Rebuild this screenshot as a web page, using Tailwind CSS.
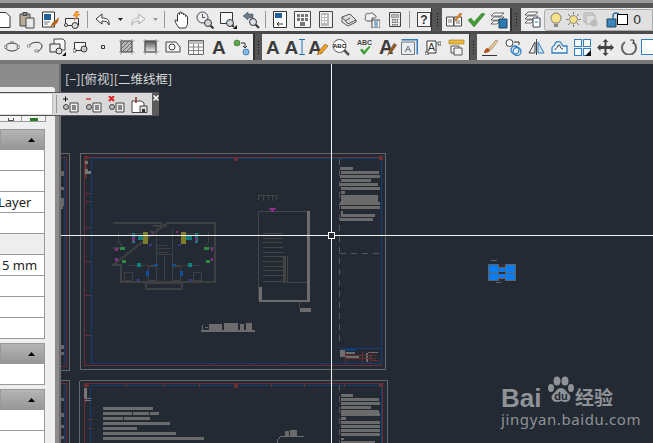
<!DOCTYPE html>
<html lang="en">
<head>
<meta charset="UTF-8">
<title>CAD</title>
<script src="https://cdn.jsdelivr.net/npm/@tailwindcss/browser@4"></script>
</head>
<body class="w-[653px] h-[443px] overflow-hidden bg-[#8a8a8a] font-['Liberation_Sans',sans-serif]">
<div class="relative w-[653px] h-[443px] overflow-hidden">
  <!-- top strip -->
  <div class="h-[3px] bg-[#9a9a9a]"></div>
  <div class="h-[5px] bg-[#555555]"></div>

  <!-- toolbar row 1 -->
  <div class="flex h-[23px] bg-[#4a4a4a]">
    <div class="flex items-center w-[432px] h-[23px] bg-[#ececec] border-r border-[#333] overflow-hidden">
      <div class="flex items-center -ml-[8px]">
        <span class="w-[23px] flex justify-center"><svg class="w-[18px] h-[18px]" viewBox="0 0 18 18"><path d="M2 1.5h9l4 4v11H2z" fill="#fff" stroke="#333"/></svg></span>
        <span class="w-[23px] flex justify-center"><svg class="w-[18px] h-[18px]" viewBox="0 0 18 18"><path d="M2 3h10v12H2z" fill="#b9ab97" stroke="#444"/><path d="M5 1.5h4v3H5z" fill="#888" stroke="#444"/><path d="M8 7h8v10H8z" fill="#e8e8e8" stroke="#444"/></svg></span>
        <span class="w-[23px] flex justify-center"><svg class="w-[18px] h-[18px]" viewBox="0 0 18 18"><path d="M1.5 1h12v15h-12z" fill="#fff" stroke="#333"/><path d="M3 3h7v6H3z" fill="#1f5f9c"/><path d="M3 11h6M3 13h4" stroke="#777"/><path d="M9 16l3-5 3-2 3-3-1 5-3 3z" fill="#b8651c"/></svg></span>
        <span class="w-[23px] flex justify-center"><svg class="w-[18px] h-[18px]" viewBox="0 0 18 18"><path d="M1.500 7.500h13v7h-13z" fill="#f4f4f4" stroke="#333"/><circle cx="2" cy="14" r="1.500" fill="#fff" stroke="#333"/><circle cx="11" cy="14.500" r="3" fill="#ddd" stroke="#333"/><path d="M12 0l-3 5h3l-2 5 6-7h-3l2-3z" fill="#f5a31c" stroke="#c66" stroke-width=".4"/></svg></span>
      </div>
      <span class="w-px h-[17px] bg-[#999] ml-[3px] mr-[7px]"></span>
      <svg class="w-[16px] h-[14px]" viewBox="0 0 16 14"><path d="M7 1L1 6l6 5V8c4 0 6 1 7 4 1-5-2-7-7-7z" fill="#fff" stroke="#333"/></svg>
      <svg class="w-[5px] h-[3px] ml-[7px]" viewBox="0 0 5 3"><path d="M0 0h5L2.500 3z" fill="#222"/></svg>
      <svg class="w-[16px] h-[14px] ml-[7px]" viewBox="0 0 16 14"><path d="M9 1l6 5-6 5V8C5 8 3 9 2 12 1 7 4 5 9 5z" fill="#f2f2f2" stroke="#aaa"/></svg>
      <svg class="w-[5px] h-[3px] ml-[7px]" viewBox="0 0 5 3"><path d="M0 0h5L2.500 3z" fill="#999"/></svg>
      <span class="w-px h-[17px] bg-[#999] ml-[6px] mr-[6px]"></span>
      <span class="w-[23px] flex justify-center"><svg class="w-[17px] h-[18px]" viewBox="0 0 17 18"><path d="M5 17C3 14 1 11 1 9.500c0-1 1.500-1 2.500 1V3.500c0-1.500 2-1.500 2 0V2c0-1.500 2-1.500 2 0v1c0-1.500 2-1.500 2 0v1c0-1 2-1 2 0v1.500c0-1 2-1 2 0V12c0 2-1 3.500-2 5z" fill="#fff" stroke="#333"/></svg></span>
      <span class="w-[23px] flex justify-center"><svg class="w-[18px] h-[18px]" viewBox="0 0 18 18"><circle cx="6.500" cy="6.500" r="5.500" fill="#eee" stroke="#445"/><path d="M6.500 3v3.500H9" fill="none" stroke="#445"/><circle cx="12" cy="12" r="3.500" fill="#cdd6dc" stroke="#333"/><path d="M14.500 14.500l3 3" stroke="#333" stroke-width="2"/></svg></span>
      <span class="w-[23px] flex justify-center"><svg class="w-[18px] h-[18px]" viewBox="0 0 18 18"><path d="M1.500 1.500h12v11h-12z" fill="#f6f6f6" stroke="#333"/><circle cx="11" cy="12" r="3.500" fill="#cdd6dc" stroke="#333"/><path d="M13 14l2 2" stroke="#333" stroke-width="2"/><path d="M14 18l4-4v4z" fill="#111"/></svg></span>
      <span class="w-[23px] flex justify-center"><svg class="w-[18px] h-[18px]" viewBox="0 0 18 18"><path d="M1 5l5-4v2h5v4H6v2z" fill="#6c7a8a" stroke="#444" stroke-width=".5"/><circle cx="11" cy="11" r="3.500" fill="#dde" stroke="#333"/><path d="M13.500 13.500l3.500 3.500" stroke="#333" stroke-width="2"/></svg></span>
      <span class="w-px h-[17px] bg-[#999] ml-[2px] mr-[3px]"></span>
      <span class="w-[23px] flex justify-center"><svg class="w-[14px] h-[17px]" viewBox="0 0 14 17"><path d="M.5.500h13v16H.500z" fill="#fff" stroke="#333"/><path d="M2 2h7v5H2z" fill="#1f5f9c"/><path d="M10 13H4m2-2l-2 2 2 2" fill="none" stroke="#333"/></svg></span>
      <span class="w-[23px] flex justify-center"><svg class="w-[17px] h-[17px]" viewBox="0 0 17 17"><path d="M.5.500h16v16H.500z" fill="#f6f6f6" stroke="#444"/><path d="M3 3h3v3H3zM7 3h3v3H7zM11 3h3v3h-3zM3 7h3v3H3zM7 7h3v3H7zM11 7h3v3h-3zM6 11h5v4H6z" fill="#777"/></svg></span>
      <span class="w-[23px] flex justify-center"><svg class="w-[14px] h-[17px]" viewBox="0 0 14 17"><path d="M.5.500h13v16H.500z" fill="#f0f0f0" stroke="#444"/><path d="M2 2h8v13H2z" fill="#bbb"/><path d="M3 4h2v2H3zM6 4h2v2H6zM3 7h2v2H3zM6 7h2v2H6zM3 10h2v2H3zM6 10h2v2H6z" fill="#fff"/></svg></span>
      <span class="w-[23px] flex justify-center"><svg class="w-[16px] h-[14px]" viewBox="0 0 16 14"><path d="M1 4l8-3 6 6-8 4z" fill="#ddd" stroke="#555"/><path d="M1 4v5l6 4 8-4V7" fill="none" stroke="#555"/><path d="M4 8l5-3" stroke="#555"/></svg></span>
      <span class="w-[23px] flex justify-center"><svg class="w-[16px] h-[16px]" viewBox="0 0 16 16"><path d="M2 5C0 3 3 0 5 2c2-2 5-1 5 1 2 0 3 2 1 3H8v3H4C1 9 0 6 2 5z" fill="#f0f0f0" stroke="#555"/><path d="M8 8h8v8H8z" fill="#fff" stroke="#444"/><path d="M10 10h4M10 12h4M10 14h4" stroke="#1f5f9c"/></svg></span>
      <span class="w-[23px] flex justify-center"><svg class="w-[12px] h-[15px]" viewBox="0 0 12 15"><path d="M.5.500h11v14H.500z" fill="#eee" stroke="#444"/><path d="M2.500 2.500h7v3h-7z" fill="#bbb" stroke="#666" stroke-width=".5"/><path d="M3 7h1.500v1.500H3zM5.300 7h1.500v1.500H5.300zM7.600 7h1.500v1.500H7.600zM3 9.500h1.500V11H3zM5.300 9.500h1.500V11H5.300zM7.600 9.500h1.500V11H7.600zM3 12h1.500v1.500H3zM5.300 12h1.500v1.500H5.300zM7.600 12h1.500v1.500H7.600z" fill="#666"/></svg></span>
      <span class="w-px h-[17px] bg-[#999] ml-[3px] mr-[7px]"></span>
      <span class="flex items-center justify-center w-[14px] h-[15px] bg-[#f5f5f5] border border-[#444] font-['Liberation_Sans',sans-serif] text-[12px] font-bold leading-none text-[#333]">?</span>
    </div>
    <div class="flex flex-col justify-center items-center w-[10px] h-[23px] bg-[#555]"><div class="w-[3px] h-[15px] bg-[radial-gradient(#111_40%,transparent_45%)] bg-[length:3px_3px]"></div></div>
    <div class="flex items-center w-[68px] h-[23px] bg-[#ececec]">
      <span class="w-[23px] flex justify-center"><svg class="w-[16px] h-[16px]" viewBox="0 0 16 16"><path d="M.5 5h7v9h-7zM8 5h7.500v9H8z" fill="#fff" stroke="#444"/><path d="M2 8h4M2 10h4M10 9h4M10 11h4" stroke="#777"/><path d="M9 7l5-6 2 1-5 6-2 1z" fill="#e98a1f" stroke="#844" stroke-width=".4"/></svg></span>
      <span class="w-[22px] flex justify-center"><svg class="w-[18px] h-[14px]" viewBox="0 0 18 14"><path d="M1 7l3-2 3 4L15 0l3 1L7 14z" fill="#3f9d34" stroke="#2b6f22" stroke-width=".5"/></svg></span>
      <span class="w-[23px] flex justify-center"><svg class="w-[18px] h-[18px]" viewBox="0 0 18 18"><path d="M4 2h10l-3 3H1zM4 6h10l-3 3H1zM4 10h6l-3 3H1z" fill="#fff" stroke="#444" stroke-width=".8"/><path d="M9 8h8v9H9z" fill="#2a7bb8" stroke="#245"/></svg></span>
    </div>
    <div class="w-[2px] h-[23px] bg-[#333]"></div>
    <div class="flex flex-col justify-center items-center w-[9px] h-[23px] bg-[#555]"><div class="w-[3px] h-[15px] bg-[radial-gradient(#111_40%,transparent_45%)] bg-[length:3px_3px]"></div></div>
    <div class="flex items-center flex-1 h-[23px] bg-[#ececec]">
      <span class="w-[22px] flex justify-center"><svg class="w-[17px] h-[17px]" viewBox="0 0 17 17"><path d="M4 1h10l-3 3H1zM4 5h10l-3 3H1zM4 9h6l-3 3H1z" fill="#fff" stroke="#444" stroke-width=".8"/><path d="M9 7h7v9H9z" fill="#fff" stroke="#345"/><path d="M11 11h3" stroke="#27a"/></svg></span>
      <div class="flex items-center flex-1 h-[22px] ml-px bg-[#e0e0e0] border border-[#aaa] rounded-l-[3px]">
        <svg class="w-[12px] h-[16px] ml-[5px]" viewBox="0 0 12 16"><path d="M3.500 11C2 9 1 8 1 6a5 5 0 0 1 10 0c0 2-1 3-2.500 5z" fill="#f6e08a" stroke="#555" stroke-width=".7"/><path d="M4 12h4v3H4z" fill="#888"/></svg>
        <svg class="w-[15px] h-[15px] ml-[4px]" viewBox="0 0 15 15"><circle cx="7.500" cy="7.500" r="4" fill="#f6e08a" stroke="#666" stroke-width=".7"/><path d="M7.500 0v2.500M7.500 12.500V15M0 7.500h2.500M12.500 7.500H15M2 2l2 2M11 11l2 2M13 2l-2 2M4 11l-2 2" stroke="#777"/></svg>
        <svg class="w-[15px] h-[15px] ml-[2px]" viewBox="0 0 15 15"><path d="M1 1h9v9H1z" fill="#e4e4e4" stroke="#aaa"/><path d="M3 3h9v9H3z" fill="#ddd" stroke="#aaa"/><circle cx="11" cy="11" r="3.500" fill="#bbb"/></svg>
        <svg class="w-[14px] h-[16px] ml-[8px]" viewBox="0 0 14 16"><path d="M1 7h9v8H1z" fill="#3b86bd" stroke="#245"/><path d="M7 7V4a3 3 0 0 1 6 0v2" fill="none" stroke="#2a6fa3" stroke-width="1.400"/></svg>
        <span class="w-[11px] h-[11px] -ml-[3px] bg-white border border-black"></span>
        <span class="ml-[5px] text-[13px] leading-none text-[#333] font-['DejaVu_Sans',sans-serif]">0</span>
      </div>
    </div>
  </div>

  <div class="h-[3px] bg-[#4a4a4a]"></div>

  <!-- toolbar row 2 -->
  <div class="flex h-[26px] bg-[#4a4a4a]">
    <div class="flex items-center w-[253px] h-[26px] bg-[#ececec] pl-[1px]">
      <span class="w-[23px] flex justify-center"><svg class="w-[16px] h-[12px]" viewBox="0 0 16 12"><ellipse cx="8" cy="6" rx="6.500" ry="4" fill="none" stroke="#333"/><path d="M0 5h3v2H0zM7 0h2v2H7zM13 5h3v2h-3z" fill="#fff" stroke="#333" stroke-width=".5"/></svg></span>
      <span class="w-[23px] flex justify-center"><svg class="w-[16px] h-[12px]" viewBox="0 0 16 12"><path d="M2 5C5 0 15 0 15 5c0 3-3 5-5 6" fill="none" stroke="#333"/><path d="M0 4h3v2H0zM8 9h3v2H8z" fill="#fff" stroke="#333" stroke-width=".5"/></svg></span>
      <span class="w-[23px] flex justify-center"><svg class="w-[17px] h-[18px]" viewBox="0 0 17 18"><path d="M5 1h9l2 2v9H5z" fill="#f8f8f8" stroke="#444"/><path d="M1 6h10v8H1z" fill="#eee" stroke="#333"/><circle cx="10" cy="13" r="3" fill="#ddd" stroke="#333"/><path d="M13 18l4-4v4z" fill="#111"/></svg></span>
      <span class="w-[23px] flex justify-center"><svg class="w-[16px] h-[12px]" viewBox="0 0 16 12"><path d="M1.500 1.500h11v8h-11z" fill="#f6f6f6" stroke="#333"/><circle cx="11" cy="8" r="3" fill="#ccc" stroke="#333"/><path d="M0 8h3v3H0z" fill="#fff" stroke="#333" stroke-width=".7"/></svg></span>
      <span class="w-[23px] flex justify-center"><svg class="w-[4px] h-[4px]" viewBox="0 0 4 4"><path d="M.5.500h3v3h-3z" fill="#eee" stroke="#333"/></svg></span>
      <span class="w-[25px] flex justify-center"><svg class="w-[16px] h-[16px]" viewBox="0 0 16 16"><path d="M2 2h11v11H2z" fill="#bbb" stroke="#444"/><path d="M2 6l4-4M2 10l8-8M3 13L13 3M7 13l6-6M11 13l2-2" stroke="#444" stroke-width=".7"/><path d="M0 2h16M0 13h16M2 0v16M13 0v16" stroke="#777" stroke-width=".6"/></svg></span>
      <span class="w-[23px] flex justify-center"><svg class="w-[16px] h-[16px]" viewBox="0 0 16 16"><defs><linearGradient id="g1" x1="0" y1="0" x2="0" y2="1"><stop offset="0" stop-color="#555"/><stop offset="1" stop-color="#eee"/></linearGradient></defs><path d="M2 2h11v11H2z" fill="url(#g1)" stroke="#333"/><path d="M0 2h16M0 13h16M2 0v16M13 0v16" stroke="#777" stroke-width=".6"/></svg></span>
      <span class="w-[23px] flex justify-center"><svg class="w-[16px] h-[12px]" viewBox="0 0 16 12"><path d="M1 1h10l4 5v5H1z" fill="#f4f4f4" stroke="#444"/><circle cx="7" cy="6" r="3" fill="none" stroke="#444"/></svg></span>
      <span class="w-[23px] flex justify-center"><svg class="w-[16px] h-[15px]" viewBox="0 0 16 15"><path d="M.5.500h15v14H.500z" fill="#f8f8f8" stroke="#666"/><path d="M1 1h14v3H1z" fill="#bbb"/><path d="M1 7h14M1 10.500h14M5.500 4v10M10.500 4v10" stroke="#888"/></svg></span>
      <span class="w-[23px] text-center text-[19px] leading-none font-bold text-[#3c3c3c]">A</span>
      <span class="w-[23px] flex justify-center"><svg class="w-[17px] h-[17px]" viewBox="0 0 17 17"><circle cx="4" cy="4" r="3" fill="#5ea44c" stroke="#2f6a25" stroke-width=".6"/><circle cx="13" cy="13" r="3" fill="#7fbbe8" stroke="#2f6fa5" stroke-width=".8"/><path d="M8 4h4v4m-2-1l2 2 2-2" fill="none" stroke="#333"/></svg></span>
    </div>
    <div class="w-[2px] h-[26px] bg-[#333]"></div>
    <div class="flex flex-col justify-center items-center w-[9px] h-[26px] bg-[#555]"><div class="w-[3px] h-[15px] bg-[radial-gradient(#111_40%,transparent_45%)] bg-[length:3px_3px]"></div></div>
    <div class="flex items-center w-[207px] h-[26px] bg-[#ececec]">
      <span class="w-[23px] text-center text-[19px] leading-none font-bold text-[#3c3c3c]">A</span>
      <span class="relative w-[22px] text-left text-[19px] leading-none font-bold text-[#3c3c3c]">A<svg class="absolute right-[1px] top-[1px] w-[6px] h-[16px]" viewBox="0 0 6 16"><path d="M0 .5h6M0 15.500h6M3 .5v15" stroke="#2272b5"/></svg></span>
      <span class="relative w-[23px] pl-[2px] text-[19px] leading-none font-bold text-[#3c3c3c]">A<svg class="absolute right-[1px] top-[6px] w-[11px] h-[11px]" viewBox="0 0 11 11"><path d="M0 11l2-4 6-7 3 2-6 7z" fill="#f0a01e" stroke="#642" stroke-width=".5"/></svg></span>
      <span class="w-[24px] flex justify-center"><svg class="w-[18px] h-[18px]" viewBox="0 0 18 18"><circle cx="7.500" cy="8" r="6.500" fill="#fff" stroke="#555"/><path d="M12 12l5 5" stroke="#555" stroke-width="2.500"/><text x="7.500" y="10" text-anchor="middle" font-size="6" font-weight="700" fill="#222" font-family="Liberation Sans">ABC</text></svg></span>
      <span class="w-[23px] flex justify-center"><svg class="w-[17px] h-[17px]" viewBox="0 0 17 17"><text x="8.500" y="6" text-anchor="middle" font-size="7" font-weight="700" fill="#444" font-family="Liberation Sans">ABC</text><path d="M4 11l2-1.500 2 2.500 5-5 1.500 1L8 16z" fill="#3f9d34"/></svg></span>
      <span class="relative w-[22px] pl-[3px] text-[20px] leading-none font-bold text-[#3c3c3c]">A<svg class="absolute right-[1px] top-[6px] w-[10px] h-[13px]" viewBox="0 0 10 13"><path d="M0 13l2-5 5-8 3 2-5 7z" fill="#8c5a23"/></svg></span>
      <span class="w-[24px] flex justify-center"><svg class="w-[17px] h-[16px]" viewBox="0 0 17 16"><path d="M.5 .500h16v15" fill="none" stroke="#2f7fc2" stroke-width="2"/><path d="M.5 3h13v12.500H.5z" fill="#e9eef3" stroke="#777"/><text x="7" y="13" text-anchor="middle" font-size="9" fill="#333" font-family="Liberation Sans">A</text></svg></span>
      <span class="w-[23px] flex justify-center"><svg class="w-[16px] h-[16px]" viewBox="0 0 16 16"><path d="M2 2h9v12H2z" fill="#fff" stroke="#333"/><text x="6.500" y="11.500" text-anchor="middle" font-size="11" fill="#333" font-family="Liberation Sans">A</text><path d="M0 13h3v3H0zM13 3h3v3h-3z" fill="#fff" stroke="#333" stroke-width=".8"/></svg></span>
      <span class="w-[24px] flex justify-center"><svg class="w-[17px] h-[17px]" viewBox="0 0 17 17"><path d="M1 1h15v4H1z" fill="#e8b93e" stroke="#a07b10" stroke-width=".6"/><path d="M3 7h8v7H3z" fill="#f2f2f2" stroke="#555"/><path d="M6 9h8v7H6z" fill="#f2f2f2" stroke="#555"/></svg></span>
    </div>
    <div class="w-[2px] h-[26px] bg-[#333]"></div>
    <div class="flex flex-col justify-center items-center w-[9px] h-[26px] bg-[#555]"><div class="w-[3px] h-[15px] bg-[radial-gradient(#111_40%,transparent_45%)] bg-[length:3px_3px]"></div></div>
    <div class="flex items-center flex-1 h-[26px] bg-[#ececec] pl-[2px]">
      <span class="w-[23px] flex justify-center"><svg class="w-[17px] h-[17px]" viewBox="0 0 17 17"><path d="M0 16.500h15" stroke="#333"/><path d="M2 14c0-3 2-5 4-5l2 2c0 2-3 3-6 3z" fill="#b4511e"/><path d="M7 9l7-8 2 1-7 9z" fill="#e9c58f" stroke="#765" stroke-width=".5"/></svg></span>
      <span class="w-[23px] flex justify-center"><svg class="w-[17px] h-[17px]" viewBox="0 0 17 17"><circle cx="4.500" cy="4" r="3.500" fill="#fff" stroke="#444"/><circle cx="10" cy="11" r="4" fill="none" stroke="#2f7fc2" stroke-width="1.300"/><circle cx="12" cy="12.500" r="4" fill="none" stroke="#2f7fc2" stroke-width="1.300"/><path d="M9 3h5v3" fill="none" stroke="#333"/></svg></span>
      <span class="w-[23px] flex justify-center"><svg class="w-[17px] h-[16px]" viewBox="0 0 17 16"><path d="M7 3v11H1z" fill="#e8e8e8" stroke="#444"/><path d="M10 3v11h6z" fill="#cfe2f3" stroke="#2f7fc2"/><path d="M8.500 0v16" stroke="#444"/></svg></span>
      <span class="w-[23px] flex justify-center"><svg class="w-[17px] h-[14px]" viewBox="0 0 17 14"><path d="M1 13V8c0-2 3-2 3-4s3-3 5-2 2 4 3 4h4v7z" fill="#eef5fb" stroke="#2f7fc2" stroke-width="1.300"/><path d="M4 10c0-2 3-2 3-4s2-1 2 0 1 3 3 3" fill="none" stroke="#333"/></svg></span>
      <span class="w-[23px] flex justify-center"><svg class="w-[17px] h-[17px]" viewBox="0 0 17 17"><path d="M.5.500h7v7h-7zM9.500.500h7v7h-7zM.5 9.500h7v7h-7zM9.500 9.500h7v7h-7z" fill="#fff" stroke="#2f7fc2" stroke-width="1.100"/><path d="M11 17l6-6v6z" fill="#111"/></svg></span>
      <span class="w-[23px] flex justify-center"><svg class="w-[17px] h-[17px]" viewBox="0 0 17 17"><path d="M8.500 0l3 3h-2v4h4V5l3.500 3.500-3.500 3.500v-2h-4v4h2l-3 3-3-3h2v-4h-4v2L0 8.500 3.500 5v2h4V3h-2z" fill="#444"/></svg></span>
      <span class="w-[23px] flex justify-center"><svg class="w-[16px] h-[16px]" viewBox="0 0 16 16"><path d="M4 3a7 7 0 1 0 8 0" fill="none" stroke="#666" stroke-width="2"/><path d="M9 1l4 0-1 4" fill="none" stroke="#333"/></svg></span>
      <span class="ml-[1px] w-[12px] h-[16px] bg-white border border-[#2f7fc2] border-r-0"></span>
    </div>
  </div>
  <div class="h-[4px] bg-[#777]"></div>

  <!-- main area -->
  <div class="flex h-[379px]">
    <aside class="w-[61px] bg-[#8c8c8c] border-r-2 border-[#6e6e6e] shrink-0">
      <div class="h-[23px]"></div>
      <div class="w-[55px] h-[356px] bg-[#eeeeee] rounded-tr-[3px]">
        <div class="h-[28px]"></div>
        <div class="flex w-[46px] h-[7px] bg-[#f4f4f4] border-b border-[#999]">
          <span class="w-[22px] border-r border-[#999] flex justify-end items-end pr-[7px]"><span class="w-[6px] h-[3px] border-b border-x border-[#555]"></span></span>
          <span class="w-[24px] border-r border-[#999] flex justify-center items-end"><span class="w-[8px] h-[3px] bg-[#2a7a2a]"></span></span>
        </div>
        <div class="h-[7px]"></div>
        <div class="flex items-center justify-end w-[45px] h-[21px] pr-[9px] bg-gradient-to-b from-[#b5b5b5] to-[#969696] border border-[#999]">
          <svg class="w-[7px] h-[4px]" viewBox="0 0 7 4"><path d="M3.500 0L7 4H0z" fill="#000"/></svg>
        </div>
        <div class="w-[45px] border-r border-[#999] text-[13px] leading-[20px] text-[#222] font-['Noto_Sans',sans-serif]">
          <div class="h-[21px] bg-white border-b border-[#999]"></div>
          <div class="h-[21px] bg-white border-b border-[#999]"></div>
          <div class="h-[21px] bg-white border-b border-[#999] overflow-hidden"><span class="block -ml-[2px]">Layer</span></div>
          <div class="h-[21px] bg-white border-b border-[#999]"></div>
          <div class="h-[21px] bg-[#eeeeee] border-b border-[#999]"></div>
          <div class="h-[21px] bg-white border-b border-[#999] pl-[2px]">5 mm</div>
          <div class="h-[21px] bg-white border-b border-[#999]"></div>
          <div class="h-[21px] bg-white border-b border-[#999]"></div>
          <div class="h-[21px] bg-white border-b border-[#999]"></div>
        </div>
        <div class="h-[4px]"></div>
        <div class="flex items-center justify-end w-[45px] h-[21px] pr-[9px] bg-gradient-to-b from-[#b5b5b5] to-[#969696] border border-[#999]">
          <svg class="w-[7px] h-[4px]" viewBox="0 0 7 4"><path d="M3.500 0L7 4H0z" fill="#000"/></svg>
        </div>
        <div class="w-[45px] h-[21px] bg-white border-r border-b border-[#999]"></div>
        <div class="h-[4px]"></div>
        <div class="flex items-center justify-end w-[45px] h-[21px] pr-[9px] bg-gradient-to-b from-[#b5b5b5] to-[#969696] border border-[#999]">
          <svg class="w-[7px] h-[4px]" viewBox="0 0 7 4"><path d="M3.500 0L7 4H0z" fill="#000"/></svg>
        </div>
        <div class="w-[45px] h-[21px] bg-white border-r border-b border-[#999]"></div>
        <div class="w-[45px] h-[21px] bg-white border-r border-[#999]"></div>
      </div>
    </aside>

    <main class="relative flex-1 bg-[#232a33] overflow-hidden">
      <svg class="absolute inset-0 w-[592px] h-[379px]" viewBox="61 64 592 379" shape-rendering="crispEdges">
        <!-- left clipped sheet -->
        <g fill="none">
          <path d="M61 153.500h8.500V370H61" stroke="#666"/>
          <path d="M61 157.500h5.500V366H61" stroke="#6b2f33"/>
          <path d="M64.500 158v207" stroke="#123f73"/>
          <path d="M61 380.500h8.500V443" stroke="#666"/>
          <path d="M61 383.500h5.500V443" stroke="#6b2f33"/>
          <path d="M64.500 385v58" stroke="#123f73"/>
        </g>
        <path d="M61 171h3v5h-3zM61 187h3v3h-3zM61 198h3v8h-3zM61 206h2v3h-2zM61 345h3v4h-3zM61 352h3v3h-3zM61 398h3v3h-3zM61 413h3v4h-3zM61 425h3v3h-3zM61 436h3v3h-3z" fill="#666"/>

        <!-- sheet 1 -->
        <g fill="none">
          <path d="M80.500 153.500h305v216h-305z" stroke="#666"/>
          <path d="M84.500 157.500h297v207.500h-297z" stroke="#6b2f33"/>
          <path d="M91.500 158.500h289.500v204.500h-289.500z" stroke="#123f73"/>
          <path d="M339.500 159v186" stroke="#555" stroke-dasharray="6 5"/>
          <path d="M340 253.500h41" stroke="#555" stroke-dasharray="6 5"/>
        </g>
        <path d="M84 156h5v3h-5zM379 156h4v4h-4zM234 158h4v3h-4zM85 160h2v18h-2z" fill="#6b2f33"/>
        <path d="M85 161h3v3h-3zM85 169h3v3h-3zM85 171h6v3h-6z" fill="#777"/>
        <path d="M86 193h5M86 201h5M86 227h5M86 261h5M86 295h5M86 335h5" stroke="#6b2f33"/>
        <path d="M127 157v2M163 157v2M199 157v2M271 157v2M215 364v2M251 364v2M287 364v2M325 364v2" stroke="#6b2f33"/>
        <!-- title column text sheet 1 -->
        <path d="M340 167h13v3h-13zM341 171h38v3h-38zM340 175h40v3h-40zM341 179h30v3h-30zM340 183h38v3h-38zM341 187h39v3h-39zM341 191h4v3h-4zM341 195h37v10h-37zM340 202h40v3h-40zM341 206h39v3h-39zM341 211h2v3h-2zM341 214h34v3h-34zM340 218h33v3h-33z" fill="#6b6b6b"/>
        <!-- title block sheet 1 -->
        <path d="M340 348h41v1h-41zM345 348h11v3h-11z" fill="#123f73"/>
        <path d="M340 350h5v7h-5zM346 352h9v2h-9zM346 356h13v2h-13zM366 353h2v9h-2zM368 352h10v1h-10z" fill="#6e6e6e"/>
        <path d="M345 352h1v11h-1zM346 355h30v1h-30zM346 358h30v1h-30zM362 352h1v11h-1zM370 352h1v11h-1zM372 360h7v1h-7z" fill="#6b2f33"/>
        <!-- floor plan -->
        <g fill="none" stroke="#3d3f42" stroke-width="2">
          <path d="M113 223h48v3h-8M167 223h48v59H121v-17h-8z"/>
          <path d="M161 226h6M113 248h8M207 248h8M121 282h94M146 283h36v6h-36z" stroke-width="1.500"/>
          <path d="M156 228v36M172 228v36M156 254h16M164 255v28M128 265h28M172 265h28M143 233h-16M185 233h16M118 231v12M208 231v12" stroke-width="1"/>
          <path d="M118 242l6 5M209 242l-5 5M124 272h8v8h-8zM201 272h-8v8h8zM148 266h8v14h-8zM180 266h-8v14h8zM156 252h12M156 248h14M156 245h12" stroke-width="1"/>
        </g>
        <path d="M132 233h3v10h-3zM195 233h3v10h-3zM138 236h6v4h-6zM186 236h6v4h-6zM137 263h4v4h-4zM188 263h4v4h-4z" fill="#0e7f7c"/>
        <path d="M143 232h5v12h-5zM181 232h5v12h-5z" fill="#7f7d2c"/>
        <path d="M132 237h3v4h-3zM195 237h2v4h-2zM151 231h2v2h-2zM176 231h2v2h-2zM115 248h3v3h-3zM211 248h2v3h-2zM115 258h3v3h-3zM211 258h2v3h-2z" fill="#84307f"/>
        <path d="M120 247h5v3h-5zM204 247h5v3h-5zM122 260h4v3h-4zM206 260h4v3h-4z" fill="#2b8a3f"/>
        <path d="M149 244h3v2h-3zM178 244h3v2h-3zM137 279h3v2h-3zM189 279h3v2h-3z" fill="#3a3a8c"/>
        <path d="M146 271h3v5h-3zM180 271h3v5h-3zM154 264h4v2h-4zM172 264h4v2h-4z" fill="#134f9c"/>
        <!-- stair -->
        <g fill="none" stroke="#444">
          <path d="M258.500 300v-88.500H310M258.500 200v-5h17.500v5M263 195.500v5M268 195.500v5M272 195.500v5"/>
          <path d="M263 233.500h20M263 238.500h20M263 242.500h20M263 247.500h20M263 252.500h20M263 256.500h20M263 261.500h20M263 266.500h20M263 270.500h20M263 275.500h20M263 281.500h20M287 256v26h22"/>
          <path d="M283.500 256v27M285 256v27" stroke-width="1.500"/>
          <path d="M299.500 302v6"/>
        </g>
        <path d="M269 208h7l-3 5z" fill="#8c2f8c"/>
        <path d="M259 287h3v15h-3zM259 300h51v2h-51zM307 211h3v91h-3zM300 308h11v4h-11z" fill="#6c6c6c"/>
        <!-- drawing title -->
        <path d="M202 325h1v5h-1zM205 327h3v1h-3zM209 324h13v6h-13zM224 323h14v7h-14zM240 324h4v6h-4zM246 323h6v7h-6zM201 330h54v2h-54z" fill="#6c6c6c"/>

        <!-- sheet 2 -->
        <g fill="none">
          <path d="M79.500 380.500h307.500V443M79.500 380.500V443" stroke="#666"/>
          <path d="M84.500 383.500h297.500V443M84.500 383.500V443" stroke="#6b2f33"/>
          <path d="M90.500 385.500h290.500V443M90.500 385.500V443" stroke="#123f73"/>
          <path d="M339.500 385v58" stroke="#555" stroke-dasharray="6 5"/>
        </g>
        <path d="M84 383h5v4h-5zM379 383h4v4h-4zM234 384h4v4h-4zM85 388h2v14h-2z" fill="#6b2f33"/>
        <path d="M84 388h3v10h-3zM85 398h6v1h-6zM85 400h6v1h-6z" fill="#777"/>
        <path d="M126 384v3M163 384v3M199 384v3M271 384v3M304 384v3M344 384v3M88 419h5M87 428h5" stroke="#6b2f33"/>
        <path d="M103 407h50v3h-50zM103 412h29v3h-29zM133 412h16v3h-16zM150 412h9v3h-9zM103 417h20v3h-20zM124 417h26v3h-26zM103 422h67v3h-67zM103 427h34v3h-34zM103 432h73v3h-73zM103 437h101v3h-101z" fill="#6b6b6b"/>
        <path d="M341 394h12v3h-12zM341 398h38v3h-38zM341 402h39v3h-39zM341 406h30v3h-30zM341 410h38v6h-38zM341 413h39v3h-39zM341 417h5v3h-5zM341 421h39v3h-39zM341 425h39v3h-39zM341 429h39v3h-39zM341 433h39v3h-39zM341 438h3v2h-3zM341 441h34v2h-34zM190 437h14v3h-14z" fill="#6b6b6b"/>
        <path d="M285 431h4v5h-4zM290 430h7v6h-7zM280 436h24v1h-24zM279 437h1v2h-1zM277 439h1v4h-1z" fill="#6b6b6b"/>

        <!-- selected block -->
        <path d="M488 264h28v17h-28z" fill="#5e6168"/>
        <path d="M489 265h9v8h-9zM489 274h9v6h-9zM506 265h9v8h-9zM506 274h9v6h-9zM499 268h6v4h-6zM499 274h6v4h-6z" fill="#0a7cf0"/>
        <path d="M491 260h6v1h-6zM496 282h5v1h-5z" fill="#5e6168"/>
        <path d="M499 272h6v2h-6zM499 264h6v3h-6zM499 279h6v2h-6z" fill="#2b3038"/>

        <!-- crosshair -->
        <path d="M331 64v379M61 235.500h592" stroke="#f2f2f2"/>
        <path d="M328.500 232.500h6v6h-6z" fill="#232a33" stroke="#fff"/>
      </svg>

      <span class="absolute left-[4px] top-[6px] text-[12.5px] leading-[18px] text-[#d8d8d8] font-['Noto_Sans_CJK_SC','Noto_Sans',sans-serif] whitespace-nowrap">[−][俯视][二维线框]</span>

      <!-- watermark -->
      <div class="absolute left-[440px] top-[320px] w-[120px] h-[50px] text-[#8f9296]">
        <span class="absolute left-0 top-[1px] text-[26px] leading-[26px] font-bold font-['Liberation_Sans',sans-serif]">Bai</span>
        <svg class="absolute left-[45px] -top-[9px] w-[30px] h-[30px]" viewBox="0 0 30 30"><g fill="#8f9296"><ellipse cx="5" cy="13" rx="3" ry="4"/><ellipse cx="11" cy="6" rx="3.500" ry="4.500"/><ellipse cx="19" cy="6" rx="3.500" ry="4.500"/><ellipse cx="25" cy="13" rx="3" ry="4"/><path d="M15 13c4 0 5 4 8 6 3 3 1 8-4 8-2 0-3-1-4-1s-2 1-4 1c-5 0-7-5-4-8 3-2 4-6 8-6z"/></g><text x="15" y="25" text-anchor="middle" font-size="11" font-weight="700" fill="#232a33" font-family="Liberation Sans">du</text></svg>
        <span class="absolute left-[74px] top-[1px] text-[19px] leading-[24px] font-bold font-['Noto_Sans_CJK_SC',sans-serif] whitespace-nowrap">经验</span>
        <span class="absolute left-0 top-[25px] text-[15px] leading-[20px] tracking-[0.6px] font-['Noto_Sans',sans-serif] whitespace-nowrap">jingyan.baidu.com</span>
      </div>
    </main>
  </div>

  <!-- floating toolbar -->
  <div class="absolute left-0 top-[92px] flex items-center w-[159px] h-[24px] bg-[#d9d9d9] border-y border-[#555]">
    <div class="w-[53px] h-[20px] bg-white border-r border-[#bbb]"></div>
    <span class="w-px h-[18px] bg-[#999] ml-[3px] mr-[2px]"></span>
    <span class="w-[23px] flex justify-center"><svg class="w-[17px] h-[17px]" viewBox="0 0 17 17"><path d="M1 3h5M3.500 0.500v5" stroke="#111"/><circle cx="4" cy="11" r="2.500" fill="#bbb" stroke="#444"/><path d="M8 7h8v9H8z" fill="#eee" stroke="#444"/><path d="M10 9h4v5h-4z" fill="#888"/></svg></span>
    <span class="w-[23px] flex justify-center"><svg class="w-[17px] h-[17px]" viewBox="0 0 17 17"><path d="M1 3h5" stroke="#c22" stroke-width="1.300"/><circle cx="4" cy="11" r="2.500" fill="#bbb" stroke="#444"/><path d="M8 7h8v9H8z" fill="#eee" stroke="#444"/><path d="M10 9h4v5h-4z" fill="#888"/></svg></span>
    <span class="w-[23px] flex justify-center"><svg class="w-[17px] h-[17px]" viewBox="0 0 17 17"><path d="M1 0l5 5M6 0L1 5" stroke="#d22" stroke-width="2"/><circle cx="4" cy="11" r="2.500" fill="#bbb" stroke="#444"/><path d="M8 7h8v9H8z" fill="#eee" stroke="#444"/><path d="M10 9h4v5h-4z" fill="#888"/></svg></span>
    <span class="w-[23px] flex justify-center"><svg class="w-[17px] h-[17px]" viewBox="0 0 17 17"><path d="M1 5h9l3 2v9.500H1z" fill="#fff" stroke="#444"/><path d="M5 1v6" stroke="#833" stroke-width="1.500"/><path d="M9 10h7v6.500H9z" fill="#ddd" stroke="#444"/><path d="M11 13h3v3h-3z" fill="#333"/></svg></span>
    <div class="flex justify-center self-stretch flex-1 ml-px bg-[#5b5b5b] pt-[2px]"><svg class="w-[6px] h-[6px]" viewBox="0 0 6 6"><path d="M.5.500l5 5M5.500.500l-5 5" stroke="#fff" stroke-width="1.500"/></svg></div>
  </div>
</div>
</body>
</html>
